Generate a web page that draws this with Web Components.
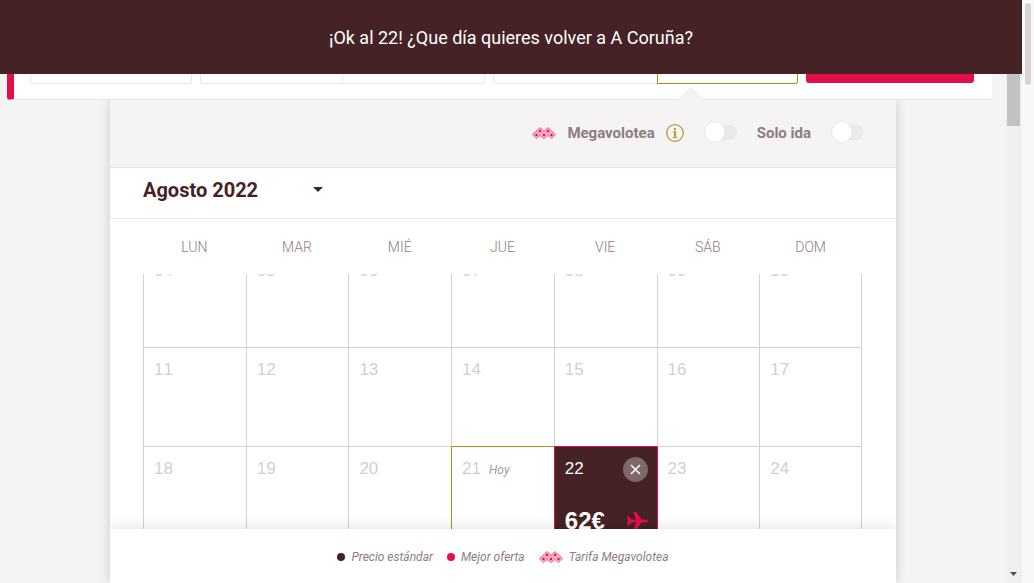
<!DOCTYPE html>
<html lang="es">
<head>
<meta charset="utf-8">
<title>Volotea - Elige tu vuelta</title>
<style>
  body { margin: 0; background: #f5f3f4; color: #452225; font-family: Roboto, "Liberation Sans", sans-serif; }
</style>
</head>
<body>
<booking-shell>
  <notice-bar slot="notice">¡Ok al 22! ¿Que día quieres volver a A Coruña?</notice-bar>
  <search-bar></search-bar>
  <calendar-panel>
    <toggle-switch slot="options" name="mega">
      <mega-icon slot="icon"></mega-icon>
      Megavolotea
      <info-button slot="info"></info-button>
    </toggle-switch>
    <toggle-switch slot="options" name="oneway">Solo ida</toggle-switch>
    <month-picker slot="month"></month-picker>
    <month-grid slot="grid"></month-grid>
    <legend-item slot="legend" style="--dot:#452225">Precio estándar</legend-item>
    <legend-item slot="legend" style="--dot:#e20f48">Mejor oferta</legend-item>
    <legend-item slot="legend"><mega-icon slot="mark"></mega-icon>Tarifa Megavolotea</legend-item>
  </calendar-panel>
</booking-shell>

<script>
const component = (name, html, setup) => {
  const template = document.createElement('template');
  template.innerHTML = html;
  customElements.define(name, class extends HTMLElement {
    constructor() {
      super();
      this.attachShadow({ mode: 'open' }).append(template.content.cloneNode(true));
    }
    connectedCallback() { if (setup) setup(this, this.shadowRoot); }
  });
};

component('booking-shell', `
<style>
  :host { display: grid; height: 100vh; grid-template-columns: minmax(0, 1fr) 17px 12px; grid-template-rows: auto minmax(0, 1fr); }
  .notice { grid-column: 1 / 3; }
  main { grid-column: 1; grid-row: 2; display: flex; flex-direction: column; min-height: 0; }
  .inner { grid-column: 2; grid-row: 2; background: #f0f0f0; display: flex; flex-direction: column; align-items: center; justify-content: space-between; }
  .inner i { width: 13px; height: 52px; background: #c1c1c1; }
  .inner svg { width: 7px; height: 4px; margin-bottom: 7px; }
  .outer { grid-column: 3; grid-row: 1 / 3; background: #f8f8f8; display: flex; justify-content: center; }
  .outer i { width: 6px; height: 82px; margin-top: 3px; border-radius: 3px; background: #d9d4d4; }
</style>
<div class="notice"><slot name="notice"></slot></div>
<main><slot></slot></main>
<div class="inner" aria-hidden="true"><i></i><svg viewBox="0 0 7 4"><path d="M0 0h7L3.500 4z" fill="#505050"/></svg></div>
<div class="outer" aria-hidden="true"><i></i></div>`);

component('notice-bar', `
<style>
  :host { display: block; background: #452225; color: #fff; text-align: center; font-size: 18px; line-height: 24px; padding: 26px 0 24px; }
</style><slot></slot>`);

component('search-bar', `
<style>
  :host { display: block; position: relative; z-index: 1; margin: 0 13px 0 7px; }
  form { display: grid; grid-template-columns: minmax(0, 162fr) minmax(0, 285fr) minmax(0, 304fr) minmax(0, 168fr); column-gap: 8px; box-sizing: border-box; height: 26px; padding: 0 18px 0 16px; background: #fff; border-left: 7px solid #e20f48; border-bottom: 1px solid #e9e7e7; border-bottom-left-radius: 3px; }
  div { position: relative; display: flex; height: 10px; }
  input { flex: 1; min-width: 0; box-sizing: border-box; margin: 0; padding: 0; height: 10px; background: #fff; border: 1px solid #e9e7e7; border-top: 0; border-radius: 0 0 3px 3px; outline: 0; }
  .pair input:first-child { border-bottom-right-radius: 0; }
  .pair input + input { border-left: 0; border-bottom-left-radius: 0; }
  .dates input:first-child { flex: 163; border-right: 0; }
  .dates input + input { flex: 140; border: 1px solid #a89319; border-top: 0; }
  button { height: 9px; border: 0; padding: 0; margin: 0; background: #e20f48; border-radius: 0 0 3px 3px; }
  svg { position: absolute; left: 61%; top: 14px; width: 24px; height: 12px; }
</style>
<form>
  <div><input aria-label="Viajeros"></div>
  <div class="pair"><input aria-label="Origen"><input aria-label="Destino"></div>
  <div class="pair dates"><input aria-label="Ida"><input aria-label="Vuelta">
    <svg viewBox="0 0 24 12" aria-hidden="true"><path d="M0 12 10 1.500Q12 0 14 1.500L24 12z" fill="#f5f3f4"/><path d="M0 11.500 10.500 1.500Q12 .4 13.500 1.500L24 11.500" fill="none" stroke="#e9e7e7"/></svg>
  </div>
  <button type="button" aria-label="Buscar"></button>
</form>`);

component('calendar-panel', `
<style>
  :host { display: flex; flex-direction: column; flex: 1; min-height: 0; margin: 0 109px 0 110px; background: #fff; box-shadow: 0 0 10px rgba(69, 34, 37, .2); }
  .options { display: flex; justify-content: flex-end; align-items: center; gap: 20px; box-sizing: border-box; height: 68px; padding: 0 32px 2px 0; background: #f5f3f4; border-bottom: 1px solid #e9e7e7; }
  .month { border-bottom: 1px solid #e9e7e7; }
  .grid { flex: 1; min-height: 0; display: flex; }
  footer { position: relative; display: flex; justify-content: center; align-items: center; gap: 14px; box-sizing: border-box; height: 54px; padding-top: 2px; background: #fff; box-shadow: 0 0 15px rgba(0, 0, 0, .14); clip-path: inset(-20px 0 0 0); }
</style>
<div class="options"><slot name="options"></slot></div>
<div class="month"><slot name="month"></slot></div>
<div class="grid"><slot name="grid"></slot></div>
<footer><slot name="legend"></slot></footer>`);

component('toggle-switch', `
<style>
  :host { display: flex; align-items: center; color: #8f7d7e; font-size: 15px; line-height: 20px; font-weight: 700; }
  label { display: flex; align-items: center; gap: 11px; margin-right: 11px; }
  input { appearance: none; position: relative; width: 32px; height: 15px; margin: 0 0 0 10px; border-radius: 8px; background: #eaeae9; }
  input::before { content: ""; position: absolute; left: 0; top: -3px; width: 20px; height: 20px; border-radius: 50%; background: #fff; box-shadow: 0 0 2px rgba(69, 34, 37, .15); }
  input:checked::before { left: 12px; }
</style>
<label for="box"><slot name="icon"></slot><span><slot></slot></span></label>
<slot name="info"></slot>
<input type="checkbox" id="box">`, (host, root) => {
  root.querySelector('input').name = host.getAttribute('name');
});

component('info-button', `
<style>
  :host { display: flex; margin-right: 11px; }
  button { display: flex; padding: 0; border: 0; background: none; }
  svg { width: 18px; height: 18px; }
</style>
<button type="button" aria-label="Información"><svg viewBox="0 0 18 18"><circle cx="9" cy="9" r="8.300" fill="none" stroke="#b39f2e" stroke-width="1.300"/><path d="M8 4h2v2H8zM7 7h3v6h1.500v1h-5v-1H8V8H7z" fill="#b39f2e"/></svg></button>`);

component('mega-icon', `
<style>
  :host { display: flex; }
  svg { width: 24px; height: 12px; }
</style>
<svg viewBox="0 0 24 12" aria-hidden="true">
  <path d="M0 7.500 8 0l4 3.500L16 0l8 7.500-4.500 4.500L16 9l-4 3-4-3-3.500 3z" fill="#f9a5bb"/>
  <path d="M.5 7.500 8 .7l4 3.500L16 .7l7.500 6.800M.8 8l3.700 3.500L8 8.500l4 3 4-3 3.500 3L23.200 8" fill="none" stroke="#e9557c" stroke-width="1" stroke-dasharray="1.300 1"/>
  <path d="M7 3h2v2H7zM15 3h2v2h-2zM3.500 7h2v2h-2zM11 7h2v2h-2zM18.500 7h2v2h-2z" fill="#e20f48"/>
</svg>`);

component('month-picker', `
<style>
  :host { display: flex; position: relative; height: 50px; align-items: center; padding: 0 33px; }
  select { appearance: none; width: 184px; height: 30px; margin: 0 0 6px; padding: 0; border: 0; background: none; color: #452225; font: 700 20px/30px Roboto, "Liberation Sans", sans-serif; }
  svg { width: 10px; height: 5px; margin: 0 0 8px -14px; pointer-events: none; }
</style>
<select aria-label="Mes"><option>Agosto 2022</option></select>
<svg viewBox="0 0 10 5" aria-hidden="true"><path d="M0 0h10L5 5z" fill="#452225"/></svg>`);

component('month-grid', `
<style>
  :host { display: block; flex: 1; overflow-y: auto; scrollbar-width: none; padding: 0 34px 0 33px; }
  table { width: 100%; table-layout: fixed; border-collapse: separate; border-spacing: 0; }
  th { position: sticky; top: 0; z-index: 1; height: 55px; padding: 0; background: #fff; color: #8f7d7e; font-size: 14px; font-weight: 300; }
  td { box-sizing: border-box; height: 99px; padding: 12px 9px 0 10px; vertical-align: top; border: 0 solid #d4d1d1; border-width: 1px 0 0 1px; color: #d4cfcf; font: 17px/20px "Liberation Sans", sans-serif; font-kerning: none; }
  td:last-child { border-right-width: 1px; }
  .today { border-color: #a89319; }
  em { margin-left: 8px; color: #a89a9a; font: italic 12px/20px Roboto, "Liberation Sans", sans-serif; }
  .chosen { background: #452225; color: #fff; border-color: #e20f48; }
  .chosen + td { border-left-color: #e20f48; }
  .line { display: flex; justify-content: space-between; align-items: center; height: 20px; }
  .line + .line { margin-top: 32px; }
  b { font-size: 24px; }
  button { display: flex; align-items: center; justify-content: center; width: 25px; height: 25px; border: 0; border-radius: 50%; padding: 0; background: #7e686a; }
</style>
<table>
  <thead><tr><th>LUN</th><th>MAR</th><th>MIÉ</th><th>JUE</th><th>VIE</th><th>SÁB</th><th>DOM</th></tr></thead>
  <tbody>
    <tr><td>04</td><td>05</td><td>06</td><td>07</td><td>08</td><td>09</td><td>10</td></tr>
    <tr><td>11</td><td>12</td><td>13</td><td>14</td><td>15</td><td>16</td><td>17</td></tr>
    <tr><td>18</td><td>19</td><td>20</td><td class="today">21<em>Hoy</em></td>
      <td class="chosen">
        <div class="line"><span>22</span><button type="button" aria-label="Quitar"><svg width="11" height="11" viewBox="0 0 11 11"><path d="M1 1l9 9M10 1l-9 9" stroke="#fff" stroke-width="1.600"/></svg></button></div>
        <div class="line"><b>62€</b><svg width="21" height="18" viewBox="0 0 21 18" aria-hidden="true"><path d="M0 4.500h2L4.500 7.500h4.500L6.500 0H9l5.500 7.500h4Q21 8 21 9t-2.500 1.500h-4L9 18H6.500L9 10.500H4.500L2 13.500H0l1-4.500z" fill="#e20f48"/></svg></div>
      </td><td>23</td><td>24</td></tr>
  </tbody>
</table>`, host => { host.scrollTop = 26; });

component('legend-item', `
<style>
  :host { display: flex; align-items: center; gap: 6px; color: #8f7d7e; font-size: 12px; line-height: 20px; font-style: italic; }
  i { width: 8px; height: 8px; border-radius: 50%; background: var(--dot); }
</style>
<slot name="mark"><i></i></slot><span><slot></slot></span>`);

const grid = document.querySelector('month-grid');
grid.scrollTop = 26;
</script>
</body>
</html>
